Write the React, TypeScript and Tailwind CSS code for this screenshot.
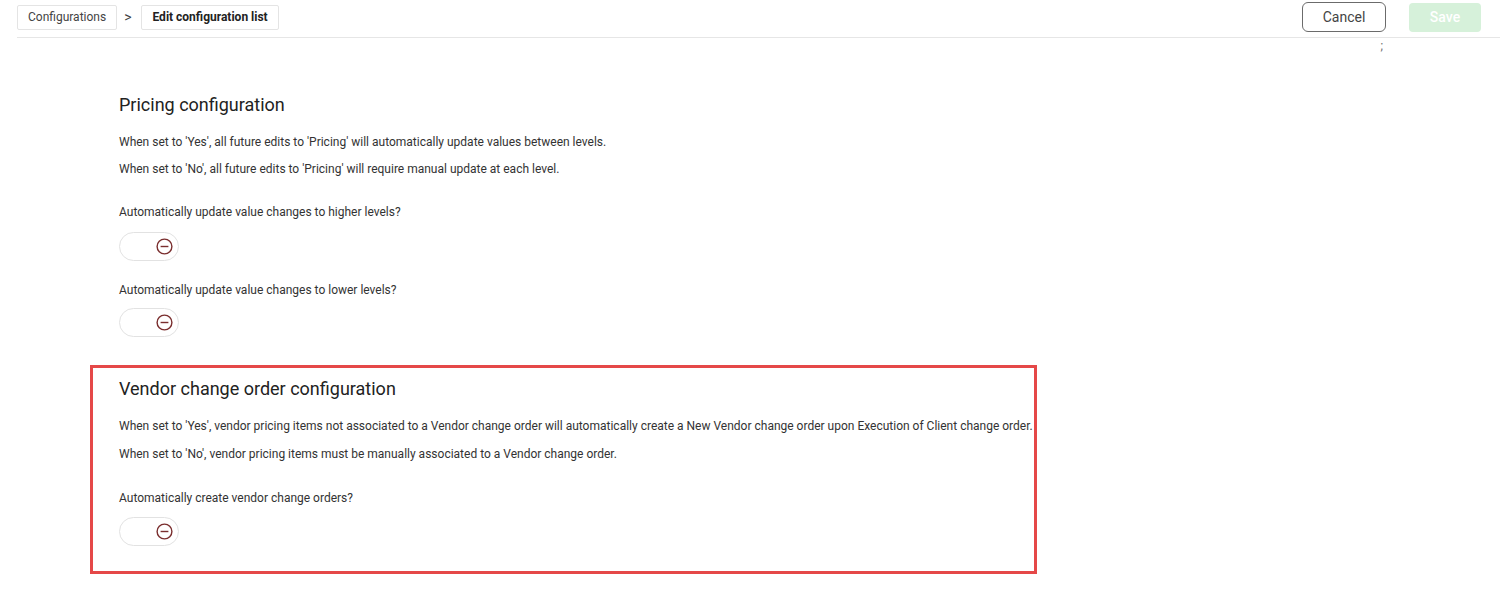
import React from 'react'

function Toggle() {
  return (
    <div className="w-[60px] h-[29px] rounded-full border border-[#e2e2e2] bg-white flex items-center justify-end pr-[5px]">
      <svg width="17" height="17" viewBox="0 0 17 17" fill="none">
        <circle cx="8.5" cy="8.5" r="7.4" stroke="#7a2e2e" strokeWidth="1.4" />
        <line x1="4.6" y1="8.5" x2="12.4" y2="8.5" stroke="#7a2e2e" strokeWidth="1.4" />
      </svg>
    </div>
  )
}

export default function App() {
  return (
    <main className="bg-white min-h-screen text-[#333] font-['Roboto',sans-serif]">
      <header className="ml-[17px] h-[38px] pb-[3px] border-b border-[#e6e6e6] flex items-center justify-between pr-[19px]">
        <div className="flex items-center">
          <div className="h-[25px] px-[10px] border border-[#e4e4e4] rounded-[2px] flex items-center text-[12px] text-[#444]">
            Configurations
          </div>
          <span className="ml-[7px] mr-[10px] text-[14px] text-[#444] leading-none">&gt;</span>
          <div className="h-[25px] px-[10px] border border-[#e4e4e4] rounded-[2px] flex items-center text-[12px] font-bold text-[#222]">
            Edit configuration list
          </div>
        </div>
        <div className="flex items-center gap-[23px]">
          <button className="w-[84px] h-[30px] border border-[#6b6b6b] rounded-[6px] text-[14px] text-[#444] bg-white">
            Cancel
          </button>
          <button className="w-[72px] h-[29px] rounded-[4px] bg-[#d6f1da] text-[14px] text-white font-medium">
            Save
          </button>
        </div>
      </header>

      <div className="h-[16px] flex justify-end pr-[117px] text-[12px] leading-[16px] text-[#666]">;</div>

      <section className="pl-[119px] mt-[39px]">
        <h2 className="text-[18px] leading-[24px] text-[#222]">Pricing configuration</h2>
        <p className="mt-[17px] text-[12px] leading-[16px]">
          When set to 'Yes', all future edits to 'Pricing' will automatically update values between levels.
        </p>
        <p className="mt-[11px] text-[12px] leading-[16px]">
          When set to 'No', all future edits to 'Pricing' will require manual update at each level.
        </p>
        <p className="mt-[27px] text-[12px] leading-[16px]">Automatically update value changes to higher levels?</p>
        <div className="mt-[12px]">
          <Toggle />
        </div>
        <p className="mt-[21px] text-[12px] leading-[16px]">Automatically update value changes to lower levels?</p>
        <div className="mt-[10px]">
          <Toggle />
        </div>
      </section>

      <section className="ml-[90px] mt-[28px] w-[947px] border-[3px] border-[#e54848] pl-[26px] pt-[9px] pb-[25px]">
        <h2 className="text-[18px] leading-[24px] text-[#222]">Vendor change order configuration</h2>
        <p className="mt-[17px] text-[12px] leading-[16px] whitespace-nowrap">
          When set to 'Yes', vendor pricing items not associated to a Vendor change order will automatically create a New Vendor change order upon Execution of Client change order.
        </p>
        <p className="mt-[12px] text-[12px] leading-[16px]">
          When set to 'No', vendor pricing items must be manually associated to a Vendor change order.
        </p>
        <p className="mt-[28px] text-[12px] leading-[16px]">Automatically create vendor change orders?</p>
        <div className="mt-[11px]">
          <Toggle />
        </div>
      </section>
    </main>
  )
}
